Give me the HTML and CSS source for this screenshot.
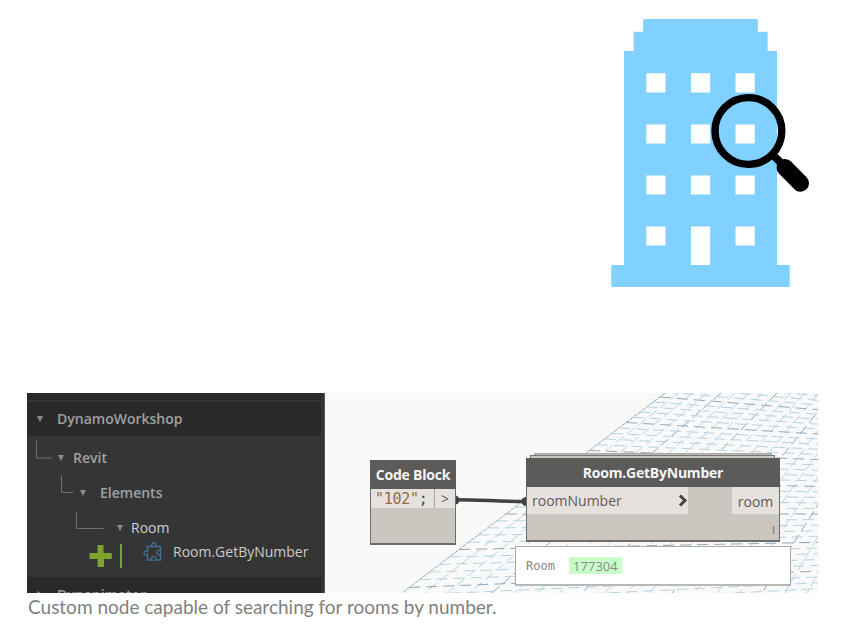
FILE: index.html
```html
<!DOCTYPE html>
<html lang="en">
<head>
<meta charset="utf-8">
<title>Custom node</title>
<link rel="stylesheet" href="styles.css">
</head>
<body>
<main class="page">
  <header class="hero">
    <svg class="building" width="200" height="270" viewBox="611 19 200 270" aria-hidden="true">
      <path fill="#80d1ff" d="M643.2 19H757.8V31.8H767.6V51H777V265H789.7V287H611.3V265H624V51H633.6V31.8H643.2Z"/>
      <g fill="#fff">
        <path d="M646.3 73.3h19.2v19.2h-19.2zM691 73.3h19.2v19.2H691zM735.5 73.3h19.2v19.2h-19.2z"/>
        <path d="M646.3 124.4h19.2v19.2h-19.2zM691 124.4h19.2v19.2H691zM735.5 124.4h19.2v19.2h-19.2z"/>
        <path d="M646.3 175.4h19.2v19.2h-19.2zM691 175.4h19.2v19.2H691zM735.5 175.4h19.2v19.2h-19.2z"/>
        <path d="M646.3 226.4h19.2v19.2h-19.2zM691 226.4h19.2V265H691zM735.5 226.4h19.2v19.2h-19.2z"/>
      </g>
      <circle cx="748.4" cy="131" r="33.4" fill="none" stroke="#000" stroke-width="7.4"/>
      <path d="M771 153L782 164" stroke="#000" stroke-width="8"/>
      <path d="M785 167.500L800.500 183.200" stroke="#000" stroke-width="17" stroke-linecap="round"/>
    </svg>
  </header>
  <figure class="figure">
    <div class="shot">
      <aside class="library">
        <div class="strip"></div>
        <div class="row category"><i class="arrow"></i><span>DynamoWorkshop</span></div>
        <div class="row revit"><i class="arrow"></i><span>Revit</span></div>
        <div class="row elements"><i class="arrow"></i><span>Elements</span></div>
        <div class="row room"><i class="arrow"></i><span>Room</span></div>
        <div class="row leaf">
          <svg class="plus" width="34" height="26" viewBox="0 0 34 26"><path d="M9 2.500h5v8h8.300v5H14.500v8h-5.500v-8H1v-5h8z" fill="#7da52d" stroke="#7da52d" stroke-linejoin="round"/><path d="M32 1v24" stroke="#7da52d" stroke-width="2"/></svg>
          <svg class="puzzle" width="20" height="20" viewBox="0 0 20 20"><path d="M4.500 4.500H9.500C7.800 2.800 9 1 10.700 1S13.600 2.800 12 4.500H17.500V18H12.500C14 16.200 12.600 14.300 10.800 14.300S7.600 16.200 9.200 18H4.500V12.500C2.800 14 1 12.800 1 11S2.800 8 4.500 9.500zM17.500 8.500C15.800 7.500 14 8.800 14 10.500S15.800 13.500 17.500 12.500" fill="none" stroke="#3f719b" stroke-width="1.300"/></svg>
          <span>Room.GetByNumber</span>
        </div>
        <div class="row next"><i class="arrow closed"></i><span>Dynanimator</span></div>
        <svg class="branches" width="298" height="200" viewBox="27 393 298 200"><path d="M36.500 440.500v17.500H52M61.500 475.500V492.500H73.500M76.500 511.500V528.500H103.500" fill="none" stroke="#707070"/></svg>
      </aside>
      <section class="canvas">
        <svg class="grid" id="grid" width="493" height="200" viewBox="325 393 493 200"></svg>
        <svg class="wire" width="493" height="200" viewBox="325 393 493 200"><circle cx="455" cy="500" r="4.500" fill="#444"/><circle cx="526" cy="501.500" r="4.500" fill="#444"/><path d="M456 499.700C480 499.700 500 501.600 526 501.600" stroke="#424242" stroke-width="3.500" fill="none"/></svg>
        <div class="node code">
          <h2>Code Block</h2>
          <div class="ports"><code><b>"102"</b>;</code><span>&gt;</span></div>
        </div>
        <div class="stack back"></div>
        <div class="stack front"></div>
        <div class="node get">
          <h2>Room.GetByNumber</h2>
          <div class="ports">
            <div class="input"><span>roomNumber</span><svg width="10" height="13" viewBox="0 0 10 13"><path d="M2 1.500L7 6.500L2 11.500" fill="none" stroke="#444" stroke-width="3"/></svg></div>
            <div class="output">room</div>
          </div>
          <div class="lacing">l</div>
        </div>
        <div class="preview"><span class="label">Room</span><span class="value">177304</span></div>
      </section>
    </div>
    <figcaption>Custom node capable of searching for rooms by number.</figcaption>
  </figure>
</main>
<script src="grid.js"></script>
</body>
</html>
```
FILE: styles.css
```css
* { box-sizing: border-box; }
body { margin: 0; background: #fff; overflow: hidden; font-family: "Open Sans", sans-serif; }
.page { width: 842px; height: 633px; display: flex; flex-direction: column; }
.hero { height: 393px; padding: 19px 31px 0; display: flex; justify-content: flex-end; align-items: flex-start; }
.building { display: block; }
.figure { margin: 0 24px 0 27px; }
.shot { height: 200px; display: flex; overflow: hidden; }
.library { width: 298px; background: #353535; border-right: 1px solid #555; position: relative; overflow: hidden; color: #a0a0a0; font-size: 14px; font-weight: 600; }
.strip { height: 7px; width: 294px; background: #292929; margin-bottom: 2px; }
.row { display: flex; align-items: center; white-space: nowrap; line-height: 18px; }
.row span { display: block; }
.arrow { border: 3.5px solid transparent; border-top: 6px solid #8c8c8c; border-bottom: 0; }
.category { height: 34px; width: 294px; background: #292929; padding-left: 10px; gap: 14px; }
.revit { height: 42px; padding: 2px 0 0 31px; gap: 9px; }
.elements { height: 30px; padding-left: 53px; gap: 14px; }
.room { height: 32px; padding: 8px 0 0 90px; gap: 8px; color: #d0d0d0; font-weight: 400; }
.leaf { height: 24px; padding-left: 62px; color: #ccc; font-weight: 400; }
.plus { margin: 8px 20px 0 0; }
.puzzle { margin-right: 10px; }
.next { height: 16px; width: 294px; margin-top: 13px; background: #292929; padding: 9px 0 0 10px; gap: 14px; align-items: flex-start; overflow: hidden; }
.closed { border: 3px solid transparent; border-left: 6px solid #8c8c8c; border-right: 0; margin-top: 5px; }
.branches { position: absolute; top: 0; left: 0; }
.canvas { width: 493px; position: relative; overflow: hidden; background: #f9f9f9; }
.grid, .wire { position: absolute; left: 0; top: 0; }
.node { position: absolute; background: #cbc6bf; border: 1px solid #6e6d69; border-width: 0 1px 2px; color: #5e5c5a; }
.node h2 { margin: 0 -1px; height: 29px; background: #5d5b59; color: #f5f5f5; font-size: 14px; letter-spacing: -.22px; line-height: 30px; font-weight: 700; text-align: center; white-space: nowrap; }
.code { left: 45px; top: 67px; width: 86px; height: 85px; }
.code .ports { height: 19px; display: flex; background: #e5e1dd; }
.code code { width: 64px; border-right: 1px solid #aaa6a1; padding-left: 4px; font: 15px/20px "DejaVu Sans Mono", monospace; letter-spacing: -.3px; color: #444; }
.code b { color: #956b46; font-weight: 400; }
.code .ports span { flex: 1; text-align: center; font-size: 14px; line-height: 20px; }
.stack { position: absolute; background: #cbc6bf; border: 1px solid #777; border-bottom: 0; height: 12px; }
.back { left: 209px; width: 238px; top: 60px; background: #b9b7b3; border-color: #aaa; }
.front { left: 205px; width: 245px; top: 62px; }
.get { left: 201px; top: 65px; width: 254px; height: 84px; }
.get .ports { height: 27px; display: flex; justify-content: space-between; font-size: 14px; line-height: 29px; }
.input { width: 161px; display: flex; align-items: center; justify-content: space-between; padding: 0 0 0 5px; background: #e5e1dd; }
.output { width: 47px; background: #e5e1dd; text-align: center; }
.lacing { text-align: right; padding: 6px 4px; font-size: 11px; line-height: 20px; font-weight: 600; color: #85817c; }
.preview { position: absolute; left: 190px; top: 153px; width: 276px; height: 40px; display: flex; align-items: center; border: 1px solid #aaa; border-bottom: 2px solid #b8b8b8; background: #fff; padding-left: 10px; gap: 14px; color: #888; }
.label { font: 12px "DejaVu Sans Mono", monospace; }
.value { width: 53px; height: 17px; margin-top: -1px; background: #c8ffc8; text-align: center; font-size: 13px; line-height: 18px; }
figcaption { font: 19px/24px Lato, sans-serif; color: #7f7f7f; padding: 2px 0 0 1px; white-space: nowrap; }
```
FILE: grid.js
```js
const grid = document.getElementById('grid');
const edge = y => 665 - (y - 393) * 1.315;

function addLine(x1, y1, x2, y2, dark, dash) {
  const line = document.createElementNS('http://www.w3.org/2000/svg', 'line');
  const attrs = { x1, y1, x2, y2, stroke: dark ? '#94a8b3' : '#b7d3e3', 'stroke-dasharray': dash };
  for (const key in attrs) line.setAttribute(key, attrs[key]);
  grid.appendChild(line);
}

for (let i = 0; i < 27; i++) {
  const dash = i ? '10 4' : '4 1';
  addLine(665 + 14 * i, 393, 402 + 22.5 * i, 593, i % 4 === 0, dash);
}

let y = 374;
for (let j = 0; y < 615; j++) {
  const slope = 0.1 - j * 0.004;
  addLine(edge(y), y, 820, y + (820 - edge(y)) * slope, j % 5 === 0, '11 6');
  y += 4.4 + j * 0.1;
}
```
